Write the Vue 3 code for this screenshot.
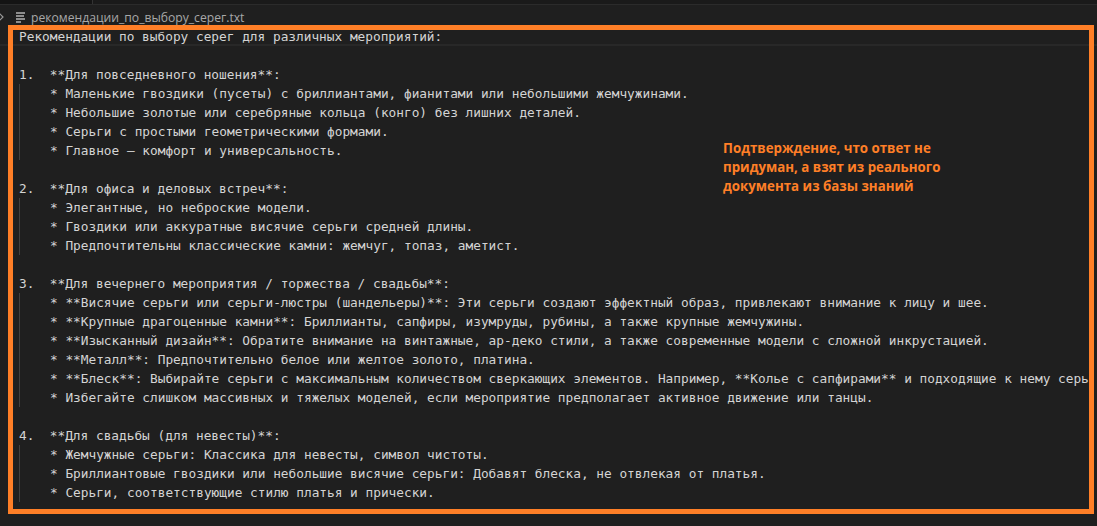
<script setup>
const sections = [
  { head: '1.  **Для повседневного ношения**:', items: [
    '* Маленькие гвоздики (пусеты) с бриллиантами, фианитами или небольшими жемчужинами.',
    '* Небольшие золотые или серебряные кольца (конго) без лишних деталей.',
    '* Серьги с простыми геометрическими формами.',
    '* Главное — комфорт и универсальность.' ] },
  { head: '2.  **Для офиса и деловых встреч**:', items: [
    '* Элегантные, но неброские модели.',
    '* Гвоздики или аккуратные висячие серьги средней длины.',
    '* Предпочтительны классические камни: жемчуг, топаз, аметист.' ] },
  { head: '3.  **Для вечернего мероприятия / торжества / свадьбы**:', items: [
    '* **Висячие серьги или серьги-люстры (шандельеры)**: Эти серьги создают эффектный образ, привлекают внимание к лицу и шее.',
    '* **Крупные драгоценные камни**: Бриллианты, сапфиры, изумруды, рубины, а также крупные жемчужины.',
    '* **Изысканный дизайн**: Обратите внимание на винтажные, ар-деко стили, а также современные модели с сложной инкрустацией.',
    '* **Металл**: Предпочтительно белое или желтое золото, платина.',
    '* **Блеск**: Выбирайте серьги с максимальным количеством сверкающих элементов. Например, **Колье с сапфирами** и подходящие к нему серь',
    '* Избегайте слишком массивных и тяжелых моделей, если мероприятие предполагает активное движение или танцы.' ] },
  { head: '4.  **Для свадьбы (для невесты)**:', items: [
    '* Жемчужные серьги: Классика для невесты, символ чистоты.',
    '* Бриллиантовые гвоздики или небольшие висячие серьги: Добавят блеска, не отвлекая от платья.',
    '* Серьги, соответствующие стилю платья и прически.' ] },
]
</script>

<template>
  <div class="page">
    <div class="topstrip"><div class="tabstub"></div></div>
    <div class="crumbs">
      <svg class="chev" width="5" height="10" viewBox="0 0 5 10"><path d="M0 1l4 4-4 4" fill="none" stroke="#9a9a9a" stroke-width="1.2"/></svg>
      <svg class="fileicon" width="9" height="11" viewBox="0 0 9 11"><path d="M0 1h9M0 4h8M0 7h9M0 10h5" fill="none" stroke="#b4b4b4" stroke-width="1.4"/></svg>
      <span class="filename">рекомендации_по_выбору_серег.txt</span>
    </div>
    <div class="editor">
      <div class="line current">Рекомендации по выбору серег для различных мероприятий:</div>
      <div class="line"></div>
      <section v-for="(s, i) in sections" :key="i">
        <div class="line">{{ s.head }}</div>
        <div class="items">
          <div v-for="(t, j) in s.items" :key="j" class="line">{{ t }}</div>
        </div>
        <div v-if="i < sections.length - 1" class="line"></div>
      </section>
    </div>
    <div class="frame"></div>
    <p class="note">Подтверждение, что ответ не придуман, а взят из реального документа из базы знаний</p>
  </div>
</template>

<style>
html, body { margin: 0; background: #1f1f1f; overflow: hidden; }
</style>

<style scoped>
.page {
  position: relative;
  width: 1097px;
  height: 526px;
  overflow: hidden;
  background: #1f1f1f;
}
.topstrip {
  height: 4px;
  background: #1a1a1a;
  border-bottom: 1px solid #2b2b2b;
}
.tabstub {
  width: 92px;
  height: 4px;
  background: #141414;
  border-right: 1px solid #333333;
  box-sizing: content-box;
}
.crumbs {
  height: 20px;
  padding-top: 2px;
  display: flex;
  align-items: center;
  font-family: "Open Sans", "Noto Sans", sans-serif;
  font-size: 12.15px;
  color: #a8a8a8;
}
.chev { margin-left: -1px; }
.fileicon { margin-left: 12px; }
.filename { margin-left: 6px; }
.editor {
  padding-left: 19px;
  font-family: "DejaVu Sans Mono", monospace;
  font-size: 12.79px;
  color: #d4d4d4;
  white-space: pre;
}
.line { height: 19px; line-height: 19px; }
.current {
  margin-left: -19px;
  padding-left: 19px;
  box-shadow: inset 0 -2px 0 #282828;
}
.items {
  border-left: 1px solid #404040;
  padding-left: 30px;
}
.frame {
  position: absolute;
  left: 8px;
  top: 25px;
  width: 1086px;
  height: 489px;
  box-sizing: border-box;
  border: 5px solid #ff7f27;
  pointer-events: none;
}
.note {
  position: absolute;
  left: 723px;
  top: 139px;
  width: 240px;
  margin: 0;
  font-family: "Open Sans", sans-serif;
  font-weight: 700;
  font-size: 13.3px;
  line-height: 19px;
  color: #ff7f27;
}
</style>
